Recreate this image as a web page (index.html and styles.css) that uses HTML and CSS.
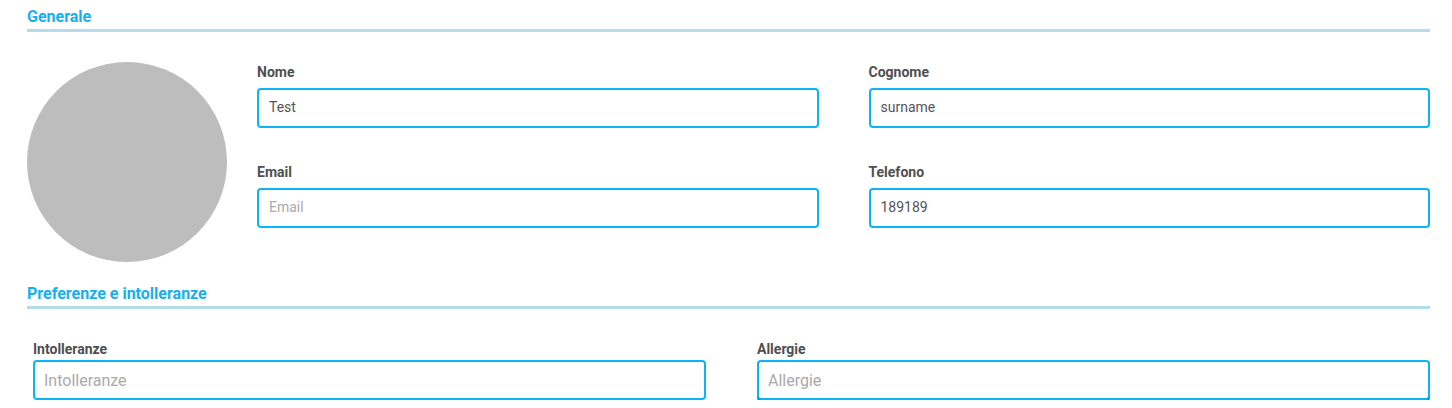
FILE: index.html
```html
<!DOCTYPE html>
<html lang="it">
<head>
<meta charset="utf-8">
<title>Profilo</title>
<link rel="stylesheet" href="styles.css">
</head>
<body>
<div class="page">
  <section class="section">
    <h2 class="section-title">Generale</h2>
    <div class="general">
      <div class="avatar"></div>
      <div class="fields">
        <div class="field">
          <label class="label">Nome</label>
          <input class="input" type="text" value="Test">
        </div>
        <div class="field">
          <label class="label">Cognome</label>
          <input class="input" type="text" value="surname">
        </div>
        <div class="field">
          <label class="label">Email</label>
          <input class="input" type="text" placeholder="Email">
        </div>
        <div class="field">
          <label class="label">Telefono</label>
          <input class="input" type="text" value="189189">
        </div>
      </div>
    </div>
  </section>
  <section class="section section-prefs">
    <h2 class="section-title">Preferenze e intolleranze</h2>
    <div class="prefs">
      <div class="field">
        <label class="label label-sm">Intolleranze</label>
        <input class="input input-lg" type="text" placeholder="Intolleranze">
      </div>
      <div class="field">
        <label class="label label-sm">Allergie</label>
        <input class="input input-lg input-focus" type="text" placeholder="Allergie">
      </div>
    </div>
  </section>
</div>
</body>
</html>
```
FILE: styles.css
```css
* { box-sizing: border-box; }
html, body { margin: 0; padding: 0; background: #fff; }
body { font-family: Roboto, "Noto Sans", Arial, sans-serif; color: #555; }

.page { padding: 7px 22px 0 27px; }

.section-title {
  margin: 0;
  font-size: 16px;
  line-height: 20px;
  font-weight: 700;
  color: #14aff2;
  padding-bottom: 2px;
  border-bottom: 3px solid #b5dbee;
}

.general {
  display: flex;
  margin-top: 30px;
}

.avatar {
  width: 200px;
  height: 200px;
  border-radius: 50%;
  background: #bdbdbd;
  flex: none;
}

.fields {
  flex: 1;
  margin-left: 30px;
  padding-top: 2px;
  display: grid;
  grid-template-columns: 1fr 1fr;
  column-gap: 50px;
  row-gap: 36px;
  align-content: start;
}

.field { display: flex; flex-direction: column; }

.label {
  font-size: 14px;
  line-height: 16px;
  font-weight: 700;
  color: #4f4f4f;
  margin-bottom: 8px;
}
.label-sm { margin-bottom: 3px; }

.input {
  height: 40px;
  width: 100%;
  border: 2px solid #08b6f7;
  border-radius: 4px;
  padding: 0 10px 2px;
  font-family: Roboto, "Noto Sans", Arial, sans-serif;
  font-size: 14px;
  color: #555;
  background: #fff;
  outline: none;
}
.input::placeholder { color: #aaa; }

.input-lg { font-size: 16px; padding: 0 9px; }
.input-focus { box-shadow: 0 1px 0 #1c4f66; }

.section-prefs { margin-top: 22px; }

.prefs {
  margin-top: 32px;
  padding-left: 6px;
  display: grid;
  grid-template-columns: 1fr 1fr;
  column-gap: 51px;
}
```
